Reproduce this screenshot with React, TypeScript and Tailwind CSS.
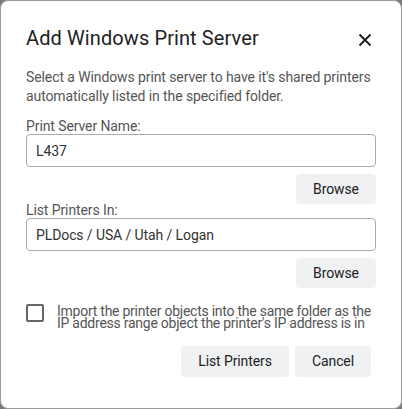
import React, { useState } from 'react';

const App = () => {
    const [serverName, setServerName] = useState('L437');
    const [folder, setFolder] = useState('PLDocs / USA / Utah / Logan');
    const [sameFolder, setSameFolder] = useState(false);

    return (
        <div className="w-[402px] h-[409px] bg-[#7a7a7a]" style={{ fontFamily: 'Roboto, "Liberation Sans", Arial, sans-serif' }}>
            <div className="w-full h-full bg-white rounded-lg border border-[#9a9a9a] px-[25px] pt-[24px] tracking-[-0.1px]">
                <div className="flex justify-between items-center">
                    <h2 className="text-[20px] leading-[26px] text-[#222] tracking-[0.1px]">Add Windows Print Server</h2>
                    <button className="mr-[4px] mt-[4px] text-[#222]">
                        <svg width="14" height="14" viewBox="0 0 14 14">
                            <path d="M1.5 1.5 L12.5 12.5 M12.5 1.5 L1.5 12.5" stroke="#222" strokeWidth="2" />
                        </svg>
                    </button>
                </div>

                <p className="mt-[17px] text-[14px] leading-[19px] text-[#555]">
                    Select a Windows print server to have it's shared printers automatically listed in the specified folder.
                </p>

                <label className="block mt-[13px] text-[14px] leading-[14px] text-[#555]">Print Server Name:</label>
                <input
                    value={serverName}
                    onChange={(e) => setServerName(e.target.value)}
                    className="mt-px w-[350px] h-[33px] border border-[#aaa] rounded-[4px] px-[9px] text-[14px] text-[#333] outline-none"
                />
                <div className="flex justify-end w-[350px] mt-[7px]">
                    <button className="w-[80px] h-[30px] bg-[#f0f1f3] rounded-[4px] text-[14px] text-[#222]">Browse</button>
                </div>

                <label className="block -mt-px text-[14px] leading-[14px] text-[#555]">List Printers In:</label>
                <input
                    value={folder}
                    onChange={(e) => setFolder(e.target.value)}
                    className="mt-px w-[350px] h-[33px] border border-[#aaa] rounded-[4px] px-[9px] text-[14px] text-[#333] outline-none"
                />
                <div className="flex justify-end w-[350px] mt-[7px]">
                    <button className="w-[80px] h-[30px] bg-[#f0f1f3] rounded-[4px] text-[14px] text-[#222]">Browse</button>
                </div>

                <label className="flex items-start gap-[13px] mt-[16px] cursor-pointer">
                    <span
                        onClick={() => setSameFolder(!sameFolder)}
                        className="w-[18px] h-[18px] shrink-0 border-2 border-[#666] rounded-[2px] bg-white"
                    >
                        {sameFolder && <span className="block w-full h-full bg-[#666]" />}
                    </span>
                    <span className="mt-[1px] text-[14px] leading-[12px] text-[#555] tracking-[-0.25px]">
                        Import the printer objects into the same folder as the IP address range object the printer's IP address is in
                    </span>
                </label>

                <div className="flex justify-end gap-[6px] mt-[17px] mr-[5px]">
                    <button className="w-[108px] h-[31px] bg-[#f0f1f3] rounded-[4px] text-[14px] text-[#222]">List Printers</button>
                    <button className="w-[76px] h-[31px] bg-[#f0f1f3] rounded-[4px] text-[14px] text-[#222]">Cancel</button>
                </div>
            </div>
        </div>
    );
};

export default App;
